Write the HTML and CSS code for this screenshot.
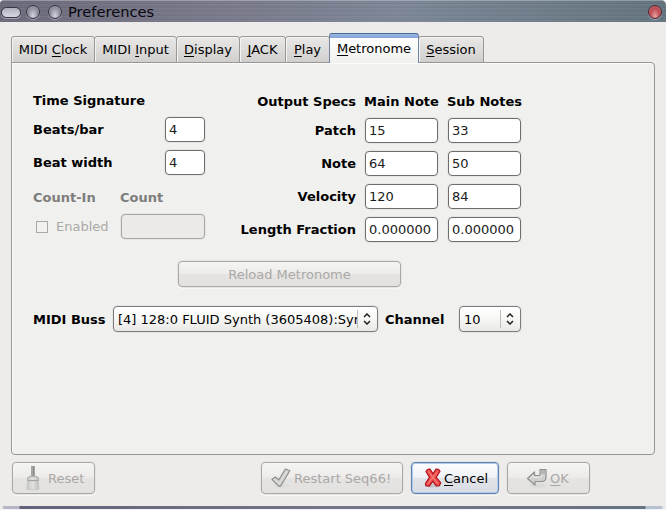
FILE: index.html
```html
<!DOCTYPE html>
<html lang="en">
<head>
<meta charset="utf-8">
<title>Preferences</title>
<link rel="stylesheet" href="styles.css">
</head>
<body>
<div class="window">
  <header class="titlebar">
    <span class="knob wide"></span><span class="knob"></span><span class="knob"></span>
    <span class="title">Preferences</span>
    <span class="knob close"></span>
  </header>
  <nav class="tabs">
    <div class="tab t-clock"><span>MIDI <u>C</u>lock</span></div>
    <div class="tab t-input"><span>MIDI <u>I</u>nput</span></div>
    <div class="tab t-display"><span><u>D</u>isplay</span></div>
    <div class="tab t-jack"><span><u>J</u>ACK</span></div>
    <div class="tab t-play"><span><u>P</u>lay</span></div>
    <div class="tab t-metro selected"><span><u>M</u>etronome</span></div>
    <div class="tab t-session"><span><u>S</u>ession</span></div>
  </nav>
  <main class="panel">
    <div class="columns">
      <section class="signature">
        <div class="label heading">Time Signature</div>
        <div class="row"><span class="label">Beats/bar</span><div class="field small">4</div></div>
        <div class="row"><span class="label">Beat width</span><div class="field small">4</div></div>
        <div class="count-head"><span class="label off">Count-In</span><span class="label off">Count</span></div>
        <div class="count-row"><span class="check"></span><span class="enabled">Enabled</span><div class="field off"></div></div>
      </section>
      <section class="specs">
        <span class="label">Output Specs</span><span class="label col">Main Note</span><span class="label col">Sub Notes</span>
        <span class="label">Patch</span><div class="field">15</div><div class="field">33</div>
        <span class="label">Note</span><div class="field">64</div><div class="field">50</div>
        <span class="label">Velocity</span><div class="field">120</div><div class="field">84</div>
        <span class="label">Length Fraction</span><div class="field">0.000000</div><div class="field">0.000000</div>
      </section>
    </div>
    <div class="button reload off">Reload Metronome</div>
    <div class="buss">
      <span class="label buss-label">MIDI Buss</span>
      <div class="combo port"><span class="value">[4] 128:0 FLUID Synth (3605408):Syn</span><span class="arrows"><svg width="8" height="12" viewBox="0 0 8 12"><path d="M1 4 4 1 7 4M1 8 4 11 7 8"/></svg></span></div>
      <span class="label channel-label">Channel</span>
      <div class="combo channel"><span class="value">10</span><span class="arrows"><svg width="8" height="12" viewBox="0 0 8 12"><path d="M1 4 4 1 7 4M1 8 4 11 7 8"/></svg></span></div>
    </div>
  </main>
  <footer class="actions">
    <div class="button reset off">
      <svg width="14" height="26" viewBox="0 0 14 26"><defs><linearGradient id="brush" x1="0" x2="1"><stop offset="0" stop-color="#c4c4c3"/><stop offset=".5" stop-color="#e2e2e1"/><stop offset="1" stop-color="#bcbcbb"/></linearGradient></defs><path d="M5 1h4v10H5z" fill="#a5a5a4"/><path d="M7.500 1v10" stroke="#8c8c8c"/><path d="M1.500 13Q2 11.500 4 11.500h6q2 0 2.500 1.500v3h-11z" fill="url(#brush)" stroke="#b0b0af"/><path d="M1.500 16h11l.3 8.500H1z" fill="url(#brush)" stroke="#cacac9"/><path d="M1.500 15.500h11" stroke="#a6a6a5"/></svg>
      <span>Reset</span>
    </div>
    <div class="button restart off">
      <svg width="20" height="20" viewBox="0 0 20 20"><ellipse cx="11" cy="17.500" rx="8" ry="2" fill="#dededd"/><path d="M1 11.300 4.300 9l3.600 2.800L14.300 1l4.500 1.800L9.500 18.300H8z" fill="#d0d0cf" stroke="#8f8f8e" stroke-width="1.200" stroke-linejoin="round"/><path d="M3 11.200l5.300 4.600 8-12.800" fill="none" stroke="#e4e4e3"/></svg>
      <span>Restart Seq66!</span>
    </div>
    <div class="button cancel">
      <svg width="18" height="20" viewBox="0 0 18 20"><ellipse cx="9" cy="17.500" rx="8" ry="2" fill="#c3c7cb"/><path d="M2 3.500Q3 .8 6 1.200L9 5.800 12 1.200q2.800-.4 4 2L12.200 9.300l4.600 5.500-1.600 2.800-3 .2-3.400-4.600-3.400 5-3.600-.6-.3-2.200 4-6z" fill="#ee5352" stroke="#b5121b" stroke-width="1.200" stroke-linejoin="round"/><path d="M4.500 3.500 13.500 15.500M13.500 3.500 4 15.500" stroke="#f78580"/></svg>
      <span><u>C</u>ancel</span>
    </div>
    <div class="button ok off">
      <svg width="22" height="20" viewBox="0 0 22 20"><ellipse cx="12" cy="17.500" rx="8" ry="2" fill="#dadad9"/><path d="M1.500 10.500 8.500 4v3.500h4.300q1.200 0 1.200-1V1.500h6v7.500q0 4.500-4.500 4.500H9v3.500z" fill="#d0d0cf" stroke="#8f8f8e" stroke-width="1.200" stroke-linejoin="round"/><path d="M14.500 2h5v4h-5z" fill="#b4b4b3"/><path d="M4 10.500l3.500-3.200v2h6q2.500 0 2.500-2" fill="none" stroke="#ececeb"/></svg>
      <span><u>O</u>K</span>
    </div>
  </footer>
  <div class="frame-bottom"></div>
</div>
</body>
</html>
```
FILE: styles.css
```css
* { box-sizing: border-box; }
body {
  margin: 0;
  background: #fff;
  color: #000;
  font: 13px/16px "DejaVu Sans", sans-serif;
}
.window {
  width: 666px;
  height: 510px;
  overflow: hidden;
  background: #edecea;
  border-radius: 4px 5px 0 0;
  display: flex;
  flex-direction: column;
}
.titlebar {
  height: 22px;
  flex: none;
  display: flex;
  align-items: center;
  padding: 2px 4px 0 1px;
  background:
    repeating-linear-gradient(#ffffff0a 0 1px, #0000 1px 3px, #0000000a 3px 4px),
    linear-gradient(#ffffff40 0 1px, #0000 1px),
    linear-gradient(90deg, #6c6b7c, #7a7b8c 35%, #7d8797 60%, #64757f);
}
.knob {
  width: 14px;
  height: 14px;
  margin-right: 8px;
  border: 1px solid #343442;
  border-radius: 7px;
  background: radial-gradient(ellipse at 50% 80%, #d4d4e0, #8c8c9c 60%, #a9a9b8);
  box-shadow: 0 1px #c5c5d2aa;
}
.knob.wide { width: 20px; height: 11px; margin-right: 5px; background: linear-gradient(#b0b0bd, #d8d8e2); }
.knob.close { margin: 0 0 0 auto; background: radial-gradient(ellipse at 50% 85%, #e9a1a2, #bd4a50 55%, #c78387); border-color: #4b2931; }
.title { font-size: 14.667px; margin-left: -2px; color: #08080e; }
.tabs { display: flex; align-items: flex-end; height: 41px; padding-left: 11px; margin-bottom: -1px; flex: none; }
.tab {
  height: 27px;
  margin-right: -1px;
  padding-top: 5px;
  text-align: center;
  border: 1px solid #999896;
  border-radius: 3px 3px 0 0;
  background: linear-gradient(#e9e8e6, #d0cfcd);
  box-shadow: inset 1px 1px #f3f3f1;
}
.t-clock { width: 84px; }
.t-input { width: 83px; }
.t-display { width: 64px; }
.t-jack { width: 47px; }
.t-play { width: 45px; }
.t-metro { width: 90px; }
.t-session { width: 66px; }
.tab.selected {
  height: 30px;
  z-index: 1;
  padding-top: 7px;
  border-color: #4b6994 #71839f #f0f0ee;
  border-bottom: 0;
  background: linear-gradient(#9abae4 0, #82a5d5 4px, #fff 4px, #f0f0ee);
  box-shadow: none;
}
u { text-decoration: underline; text-decoration-thickness: 1px; text-underline-offset: 2px; }
.panel {
  margin: 0 11px;
  height: 393px;
  flex: none;
  padding: 30px 0 0 21px;
  background: #f0f0ee;
  border: 1px solid #999796;
  border-radius: 1px 4px 4px 4px;
  box-shadow: inset 1px 1px #fbfbfa;
}
.label { font-weight: bold; white-space: nowrap; }
.label.off { color: #7d7d7d; }
.columns { display: flex; }
.signature { width: 172px; }
.heading { height: 24px; }
.row { display: flex; justify-content: space-between; align-items: center; height: 25px; margin-bottom: 8px; }
.field {
  height: 25px;
  padding: 4px 3px;
  background: #fff;
  border: 1px solid #6e6d6b;
  border-radius: 4px;
  color: #1a1a1a;
  box-shadow: 0 0 0 1px #e7e6e4;
}
.field.small { width: 40px; }
.field.off { width: 84px; background: #ebeae8; border-color: #a8a6a4; margin-left: auto; }
.count-head { display: grid; grid-template-columns: 87px 1fr; padding-top: 7px; height: 31px; }
.count-row { display: flex; align-items: center; height: 25px; padding-left: 3px; }
.check { width: 12px; height: 12px; border: 1px solid #aaa8a6; background: #f2f1ef; margin: 0 8px 0 0; }
.enabled { color: #aaa8a6; }
.specs {
  display: grid;
  grid-template-columns: 116px 73px 73px;
  grid-template-rows: 25px repeat(4, 25px);
  row-gap: 8px;
  column-gap: 10px;
  margin: -8px 0 0 34px;
  align-items: center;
}
.specs > .label { justify-self: end; }
.specs > .label.col { justify-self: center; }
.specs > .label:not(.col) { margin-right: -1px; }
.specs > .label:nth-child(-n+3) { padding-top: 8px; }
.button {
  display: flex;
  align-items: center;
  border: 1px solid #aaa8a6;
  border-radius: 4px;
  background: linear-gradient(#f5f5f4, #ecebea 50%, #e5e4e2 51%, #e2e1df);
  box-shadow: 0 0 0 1px #e6e5e3, 0 1px 0 1px #f7f7f6;
  white-space: nowrap;
}
.button.off { color: #aaa8a6; }
.reload { width: 223px; height: 26px; margin: 19px 0 0 145px; padding-top: 1px; justify-content: center; }
.buss { display: flex; align-items: center; height: 26px; margin-top: 19px; }
.combo {
  height: 26px;
  display: flex;
  align-items: center;
  border: 1px solid #7f7d7b;
  border-radius: 4px;
  background: linear-gradient(#fff, #f8f8f7 45%, #e9e8e6);
  box-shadow: 0 0 0 1px #e6e5e3;
}
.buss-label { width: 80px; padding-top: 1px; }
.channel-label { width: 74px; padding-top: 1px; }
.port { width: 265px; margin-right: 7px; }
.channel { width: 62px; }
.value { flex: 1; overflow: hidden; white-space: nowrap; padding: 1px 0 0 4px; }
.arrows { width: 20px; height: 18px; border-left: 1px solid #c0bfbd; display: flex; align-items: center; padding-left: 5px; }
.arrows path { fill: none; stroke: #222; stroke-width: 1.5; }
.actions { display: flex; height: 32px; margin: 7px 0 0 12px; flex: none; }
.actions .button { height: 32px; }
.button span { padding-top: 1px; }
.actions .reset { width: 83px; padding-left: 13px; margin-right: 166px; }
.reset span { margin-left: 8px; }
.restart { width: 142px; padding-left: 9px; margin-right: 8px; }
.restart span { margin-left: 3px; }
.actions .cancel { width: 88px; padding-left: 12px; margin-right: 8px; border-color: #5f83b2; background: linear-gradient(#fcfdfe, #edf1f6 50%, #e0e4e9 51%, #dadee4); box-shadow: inset 0 0 0 1px #b2cae8, 0 0 0 1px #e1e2e3, 0 1px 0 1px #f7f7f6; }
.cancel span { margin-left: 2px; }
.ok { width: 83px; padding-left: 18px; }
.ok span { margin-left: 2px; }
.frame-bottom {
  height: 4px;
  margin-top: 12px;
  flex: none;
  border-bottom: 1px solid #f3f3f5;
  background: linear-gradient(90deg, #edecea 0 2px, #b5b5c6 4px 19px, #62627a 20px, #75758a 50%, #677382 645px, #b5c1d1 646px 661px, #edecea 664px);
}
```
